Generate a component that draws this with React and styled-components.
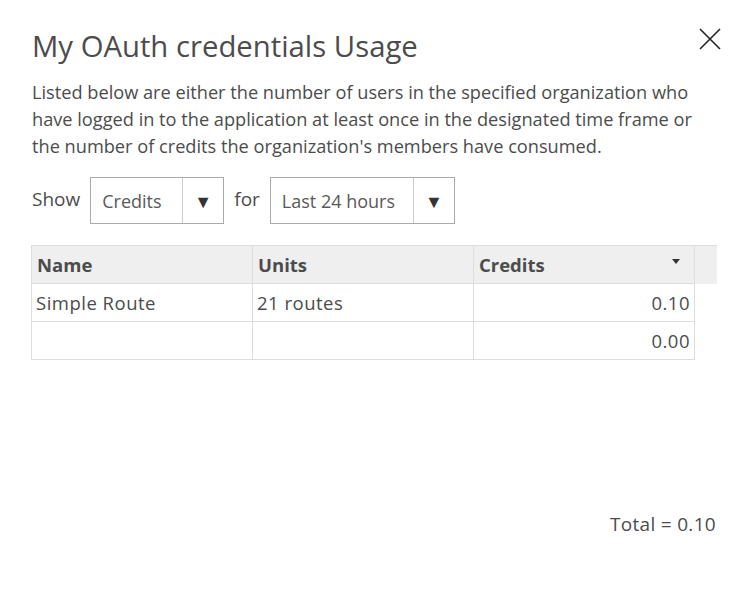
import React from 'react';
import styled, { createGlobalStyle } from 'styled-components';

const GlobalStyle = createGlobalStyle`
    body {
        margin: 0;
        background: #fff;
        font-family: "Open Sans", "Lato", sans-serif;
        color: #4c4c4c;
    }
`;

const Dialog = styled.div`
    width: 748px;
    height: 596px;
    box-sizing: border-box;
    padding: 26px 32px 0 32px;
    display: flex;
    flex-direction: column;
`;

const Header = styled.div`
    display: flex;
    justify-content: space-between;
    align-items: flex-start;
`;

const Title = styled.h1`
    margin: 0;
    font-weight: 400;
    font-size: 29.3px;
    line-height: 40px;
    color: #4c4c4c;
`;

const Close = styled.button`
    border: 0;
    background: none;
    padding: 0;
    margin: 1px -6px 0 0;
    width: 24px;
    height: 24px;
    cursor: pointer;
`;

const Intro = styled.p`
    margin: 13px 0 0 0;
    font-size: 18.2px;
    line-height: 27px;
    color: #4c4c4c;
`;

const Filters = styled.div`
    display: flex;
    align-items: center;
    gap: 10px;
    margin-top: 17px;
    font-size: 19px;
`;

const Label = styled.span`
    margin-top: -3px;
`;

const Select = styled.div`
    display: flex;
    align-items: stretch;
    width: ${p => p.width}px;
    height: 47px;
    box-sizing: border-box;
    border: 1px solid #aaa;
    background: #fff;
    font-size: 18px;
    color: #595959;
`;

const SelectValue = styled.div`
    flex: 1;
    display: flex;
    align-items: center;
    padding-left: 11px;
`;

const SelectArrow = styled.div`
    width: 40px;
    border-left: 1px solid #ccc;
    display: flex;
    align-items: center;
    justify-content: center;
    font-size: 18px;
    color: #333;
`;

const Table = styled.div`
    margin-top: 21px;
    margin-left: -1px;
    display: grid;
    grid-template-columns: 222px 221px 221px 22px;
    font-size: 18.5px;
`;

const HeadCell = styled.div`
    height: 39px;
    box-sizing: border-box;
    background: #efefef;
    border: 1px solid #ddd;
    border-right: 1px solid #ddd;
    border-left: ${p => (p.first ? '1px solid #ddd' : '0')};
    display: flex;
    align-items: center;
    justify-content: space-between;
    padding: 0 14px 0 5px;
    font-weight: 700;
    color: #4c4c4c;
`;

const Gutter = styled.div`
    height: 39px;
    background: #efefef;
    border-top: 1px solid #ddd;
    box-sizing: border-box;
`;

const Cell = styled.div`
    height: 38px;
    box-sizing: border-box;
    border-bottom: 1px solid #ddd;
    border-right: 1px solid #ddd;
    border-left: ${p => (p.first ? '1px solid #ddd' : '0')};
    display: flex;
    align-items: center;
    justify-content: ${p => (p.num ? 'flex-end' : 'flex-start')};
    padding: 0 4px 0 4px;
    color: #4c4c4c;
    letter-spacing: 0.5px;
`;

const Spacer = styled.div``;

const SortIcon = styled.span`
    width: 0;
    height: 0;
    border-left: 4px solid transparent;
    border-right: 4px solid transparent;
    border-top: 5px solid #333;
    margin-top: -6px;
`;

const Total = styled.div`
    margin-top: auto;
    margin-bottom: 59px;
    text-align: right;
    font-size: 19px;
    letter-spacing: 0.3px;
    color: #4c4c4c;
`;

const rows = [
    { name: 'Simple Route', units: '21 routes', credits: '0.10' },
    { name: '', units: '', credits: '0.00' },
];

export default function App() {
    return (
        <Dialog>
            <GlobalStyle />
            <Header>
                <Title>My OAuth credentials Usage</Title>
                <Close aria-label="Close">
                    <svg width="24" height="24" viewBox="0 0 24 24">
                        <path d="M2 2 L22 22 M22 2 L2 22" stroke="#222" strokeWidth="1.6" fill="none" />
                    </svg>
                </Close>
            </Header>
            <Intro>
                Listed below are either the number of users in the specified organization who<br />
                have logged in to the application at least once in the designated time frame or<br />
                the number of credits the organization's members have consumed.
            </Intro>
            <Filters>
                <Label>Show</Label>
                <Select width={134}>
                    <SelectValue>Credits</SelectValue>
                    <SelectArrow>▼</SelectArrow>
                </Select>
                <Label>for</Label>
                <Select width={185}>
                    <SelectValue>Last 24 hours</SelectValue>
                    <SelectArrow>▼</SelectArrow>
                </Select>
            </Filters>
            <Table>
                <HeadCell first>Name</HeadCell>
                <HeadCell>Units</HeadCell>
                <HeadCell>Credits<SortIcon /></HeadCell>
                <Gutter />
                {rows.map((r, i) => (
                    <React.Fragment key={i}>
                        <Cell first>{r.name}</Cell>
                        <Cell>{r.units}</Cell>
                        <Cell num>{r.credits}</Cell>
                        <Spacer />
                    </React.Fragment>
                ))}
            </Table>
            <Total>Total = 0.10</Total>
        </Dialog>
    );
}
